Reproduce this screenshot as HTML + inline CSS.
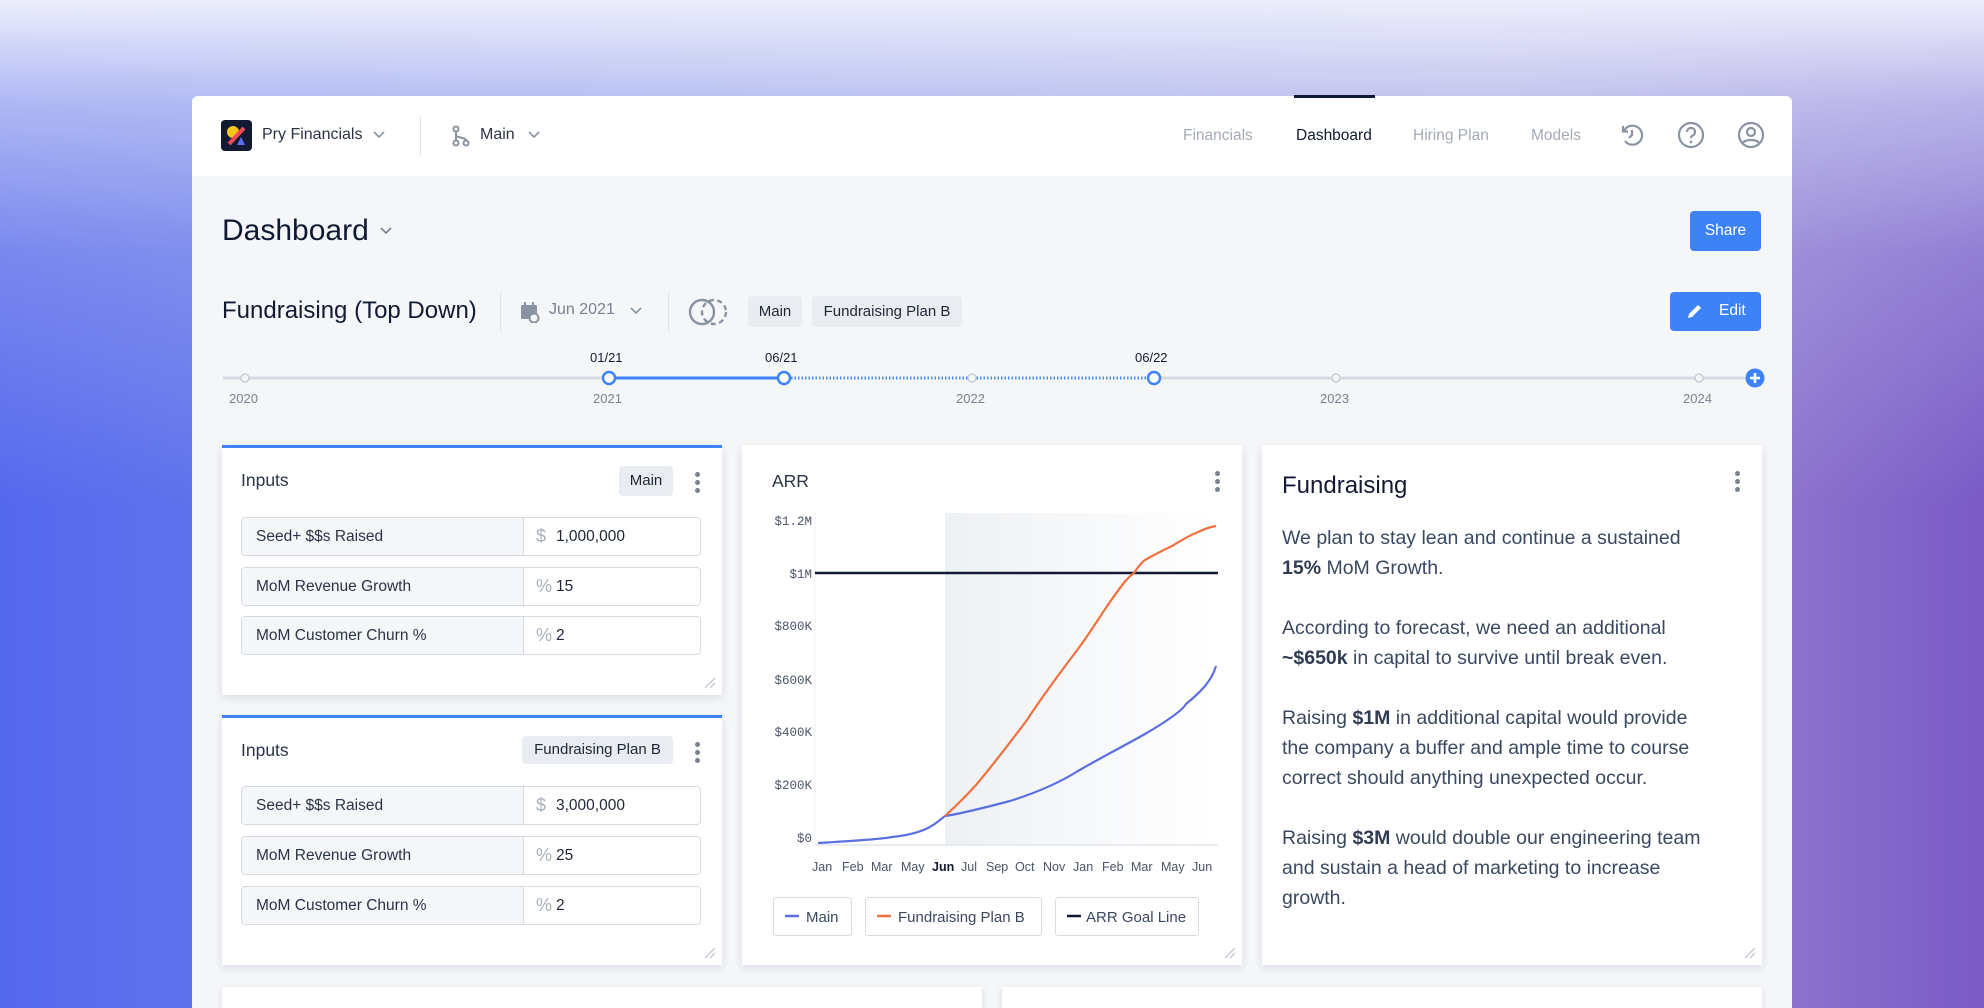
<!DOCTYPE html>
<html style="width:1984px;height:1008px;overflow:hidden"><head><meta charset="utf-8">
<style>
*{box-sizing:border-box;margin:0;padding:0}
body{width:1984px;height:1008px;overflow:hidden;font-family:"Liberation Sans",sans-serif;position:relative;
background:linear-gradient(180deg,rgba(236,238,252,1) 0%,rgba(206,211,246,0.75) 10%,rgba(190,195,240,0.35) 25%,rgba(0,0,0,0) 50%),linear-gradient(90deg,#5468ee 0%,#7f8fe6 40%,#a79ad8 75%,#7a5ac6 100%);}
.a{position:absolute}
.card{position:absolute;background:#fff;box-shadow:0 3px 8px rgba(30,40,80,0.12)}
.t{position:absolute;white-space:nowrap}
.row{position:absolute;left:19px;width:460px;height:39px;border:1px solid #d6dbe3;border-radius:4px;background:#fff;overflow:hidden}
.row .l{position:absolute;left:0;top:0;bottom:0;width:282px;background:#f4f6f8;border-right:1px solid #d6dbe3;font-size:15.5px;color:#2b3446;line-height:37px;padding-left:14px}
.row .u{position:absolute;left:294px;top:0;line-height:37px;font-size:18px;color:#a8b0bc}
.row .v{position:absolute;left:314px;top:0;line-height:37px;font-size:15.5px;color:#1f2737}
.tag{position:absolute;background:#e9edf1;border-radius:4px;font-size:15px;color:#1f2737;text-align:center}
.dots{position:absolute;width:6px}
.dots i{display:block;width:5px;height:5px;border-radius:50%;background:#7a8290;margin-bottom:3px}
.grip{position:absolute;right:6px;bottom:6px;width:12px;height:12px}
.para{font-size:19.5px;line-height:30px;color:#3a4860}
.para b{color:#2e3b52}
</style></head><body>
<div class="a" style="left:192px;top:96px;width:1600px;height:912px;background:#f4f6f8;border-radius:6px 6px 0 0;overflow:hidden">
  <div class="a" style="left:0;top:0;width:1600px;height:80px;background:#fff"></div>
</div>
<svg class="a" style="left:221px;top:120px" width="31" height="31" viewBox="0 0 31 31"><rect width="31" height="31" rx="4" fill="#121a33"/><circle cx="12" cy="12" r="6" fill="#f5c518"/><path d="M8 24 L23 8" stroke="#ee4a5a" stroke-width="4"/><path d="M16 25 L20 17 L24 25Z" fill="#5b6cf0"/></svg>
<div class="t" style="left:262px;top:126px;font-size:16px;color:#2b3446">Pry Financials</div>
<svg class="a" style="left:372px;top:130px" width="14" height="10"><path d="M2 2 L7 7 L12 2" fill="none" stroke="#8a93a2" stroke-width="1.6"/></svg>
<div class="a" style="left:420px;top:116px;width:1px;height:40px;background:#dfe3e8"></div>
<svg class="a" style="left:451px;top:125px" width="20" height="22" viewBox="0 0 20 22"><g fill="none" stroke="#8a93a2" stroke-width="2"><circle cx="5" cy="4" r="2.5"/><circle cx="5" cy="18" r="2.5"/><circle cx="15" cy="18" r="2.5"/><path d="M5 6.5V15.5M5 10c0 3 10 2 10 5.5"/></g></svg>
<div class="t" style="left:480px;top:126px;font-size:16px;color:#2b3446">Main</div>
<svg class="a" style="left:527px;top:130px" width="14" height="10"><path d="M2 2 L7 7 L12 2" fill="none" stroke="#8a93a2" stroke-width="1.6"/></svg>

<div class="t" style="left:1183px;top:127px;font-size:15.5px;color:#a4abb6">Financials</div>
<div class="a" style="left:1294px;top:95px;width:81px;height:3px;background:#121a33"></div>
<div class="t" style="left:1296px;top:127px;font-size:15.5px;color:#121a33">Dashboard</div>
<div class="t" style="left:1413px;top:127px;font-size:15.5px;color:#a4abb6">Hiring Plan</div>
<div class="t" style="left:1531px;top:127px;font-size:15.5px;color:#a4abb6">Models</div>
<svg class="a" style="left:1619px;top:122px" width="26" height="26" viewBox="0 0 26 26"><g fill="none" stroke="#8a93a2" stroke-width="2.2"><path d="M5 9 A9.5 9.5 0 1 1 6 19"/><path d="M4 4 V9.5 H9"/><path d="M13 8 V13 L10 16"/></g></svg>
<svg class="a" style="left:1677px;top:121px" width="28" height="28" viewBox="0 0 28 28"><g fill="none" stroke="#8a93a2" stroke-width="2.2"><circle cx="14" cy="14" r="12"/><path d="M10 11 a4 4 0 1 1 5.5 3.6 c-1.2.5 -1.5 1.3 -1.5 2.6"/></g><circle cx="14" cy="21" r="1.4" fill="#8a93a2"/></svg>
<svg class="a" style="left:1737px;top:121px" width="28" height="28" viewBox="0 0 28 28"><g fill="none" stroke="#8a93a2" stroke-width="2.2"><circle cx="14" cy="14" r="12"/><circle cx="14" cy="11" r="4"/><path d="M6 22 c2-4 14-4 16 0"/></g></svg>

<div class="t" style="left:222px;top:214px;font-size:30px;color:#121a33">Dashboard</div>
<svg class="a" style="left:379px;top:226px" width="14" height="10"><path d="M2 2 L7 7 L12 2" fill="none" stroke="#7a8290" stroke-width="1.6"/></svg>
<div class="a" style="left:1690px;top:211px;width:71px;height:40px;background:#3d82f6;border-radius:4px;color:#fff;font-size:15.5px;line-height:40px;text-align:center">Share</div>

<div class="t" style="left:222px;top:297px;font-size:24px;color:#121a33">Fundraising (Top Down)</div>
<div class="a" style="left:500px;top:292px;width:1px;height:40px;background:#dfe3e8"></div>
<svg class="a" style="left:520px;top:301px" width="20" height="22" viewBox="0 0 20 22"><g fill="#8a93a2"><rect x="1" y="4" width="16" height="14" rx="1.5"/><rect x="4" y="1" width="2" height="4"/><rect x="12" y="1" width="2" height="4"/></g><circle cx="14" cy="17" r="4.5" fill="#f4f6f8" stroke="#8a93a2" stroke-width="2"/></svg>
<div class="t" style="left:549px;top:301px;font-size:16px;color:#7a8290">Jun 2021</div>
<svg class="a" style="left:629px;top:306px" width="14" height="10"><path d="M2 2 L7 7 L12 2" fill="none" stroke="#8a93a2" stroke-width="1.6"/></svg>
<div class="a" style="left:668px;top:292px;width:1px;height:40px;background:#dfe3e8"></div>
<svg class="a" style="left:687px;top:296px" width="42" height="32" viewBox="0 0 42 32"><g fill="none" stroke="#8a93a2" stroke-width="2.4"><circle cx="15" cy="16" r="12"/><circle cx="27" cy="16" r="12" stroke-dasharray="5 3.5"/></g></svg>
<div class="tag" style="left:748px;top:296px;width:54px;height:31px;line-height:31px">Main</div>
<div class="tag" style="left:812px;top:296px;width:150px;height:31px;line-height:31px">Fundraising Plan B</div>
<div class="a" style="left:1670px;top:292px;width:91px;height:39px;background:#3d82f6;border-radius:4px"></div>
<svg class="a" style="left:1686px;top:302px" width="18" height="18" viewBox="0 0 18 18"><path d="M2 16 L3 12 L12 3 L15 6 L6 15Z" fill="#fff"/></svg>
<div class="t" style="left:1719px;top:302px;font-size:15.5px;color:#fff">Edit</div>

<svg class="a" style="left:215px;top:350px" width="1560" height="60">
<line x1="8" y1="28" x2="394" y2="28" stroke="#d6dbe1" stroke-width="3"/>
<line x1="394" y1="28" x2="569" y2="28" stroke="#3d82f6" stroke-width="3"/>
<line x1="569" y1="28" x2="939" y2="28" stroke="#4a90e2" stroke-width="3" stroke-dasharray="1.5 2"/>
<line x1="939" y1="28" x2="1530" y2="28" stroke="#d6dbe1" stroke-width="3"/>
<g fill="#f4f6f8" stroke="#c8cdd4" stroke-width="1.5"><circle cx="30" cy="28" r="4"/><circle cx="757" cy="28" r="4"/><circle cx="1121" cy="28" r="4"/><circle cx="1484" cy="28" r="4"/></g>
<g fill="#fff" stroke="#3d82f6" stroke-width="2.5"><circle cx="394" cy="28" r="6"/><circle cx="569" cy="28" r="6"/><circle cx="939" cy="28" r="6"/></g>
<circle cx="1540" cy="28" r="9.5" fill="#3d82f6"/><path d="M1540 23V33M1535 28H1545" stroke="#fff" stroke-width="2.5"/>
</svg>
<div class="t" style="left:590px;top:350px;font-size:13px;color:#121a33">01/21</div>
<div class="t" style="left:765px;top:350px;font-size:13px;color:#121a33">06/21</div>
<div class="t" style="left:1135px;top:350px;font-size:13px;color:#121a33">06/22</div>
<div class="t" style="left:229px;top:391px;font-size:13px;color:#7a8290">2020</div>
<div class="t" style="left:593px;top:391px;font-size:13px;color:#7a8290">2021</div>
<div class="t" style="left:956px;top:391px;font-size:13px;color:#7a8290">2022</div>
<div class="t" style="left:1320px;top:391px;font-size:13px;color:#7a8290">2023</div>
<div class="t" style="left:1683px;top:391px;font-size:13px;color:#7a8290">2024</div>

<div class="card" style="left:222px;top:445px;width:500px;height:250px;border-top:3px solid #3d82f6">
  <div class="t" style="left:19px;top:22px;font-size:17.5px;color:#2b3446">Inputs</div>
  <div class="tag" style="left:397px;top:18px;width:54px;height:30px;line-height:30px">Main</div>
  <div class="dots" style="left:473px;top:24px"><i></i><i></i><i></i></div>
  <div class="row" style="top:69px"><div class="l">Seed+ $$s Raised</div><div class="u">$</div><div class="v">1,000,000</div></div>
  <div class="row" style="top:119px"><div class="l">MoM Revenue Growth</div><div class="u">%</div><div class="v">15</div></div>
  <div class="row" style="top:168px"><div class="l">MoM Customer Churn %</div><div class="u">%</div><div class="v">2</div></div>
  <svg class="grip" viewBox="0 0 12 12"><path d="M1 11L11 1M6 11L11 6" stroke="#b8bec8" stroke-width="1.2"/></svg>
</div>
<div class="card" style="left:222px;top:715px;width:500px;height:250px;border-top:3px solid #3d82f6">
  <div class="t" style="left:19px;top:22px;font-size:17.5px;color:#2b3446">Inputs</div>
  <div class="tag" style="left:300px;top:18px;width:151px;height:28px;line-height:28px">Fundraising Plan B</div>
  <div class="dots" style="left:473px;top:24px"><i></i><i></i><i></i></div>
  <div class="row" style="top:68px"><div class="l">Seed+ $$s Raised</div><div class="u">$</div><div class="v">3,000,000</div></div>
  <div class="row" style="top:118px"><div class="l">MoM Revenue Growth</div><div class="u">%</div><div class="v">25</div></div>
  <div class="row" style="top:168px"><div class="l">MoM Customer Churn %</div><div class="u">%</div><div class="v">2</div></div>
  <svg class="grip" viewBox="0 0 12 12"><path d="M1 11L11 1M6 11L11 6" stroke="#b8bec8" stroke-width="1.2"/></svg>
</div>

<div class="card" style="left:742px;top:445px;width:500px;height:520px">
  <div class="t" style="left:30px;top:26px;font-size:17.5px;color:#2b3446">ARR</div>
  <div class="dots" style="left:473px;top:26px"><i></i><i></i><i></i></div>
  <svg class="grip" viewBox="0 0 12 12"><path d="M1 11L11 1M6 11L11 6" stroke="#b8bec8" stroke-width="1.2"/></svg>
</div>
<svg class="a" style="left:742px;top:445px" width="500" height="520" font-family="Liberation Mono, monospace" font-size="12.5" fill="#4a5468">
<defs><linearGradient id="sh" x1="0" x2="1"><stop offset="0" stop-color="#eef1f4"/><stop offset="1" stop-color="#ffffff"/></linearGradient></defs>
<rect x="203" y="68" width="273" height="332" fill="url(#sh)"/>
<line x1="73" y1="68" x2="73" y2="400" stroke="#eef0f3"/>
<line x1="73" y1="400" x2="476" y2="400" stroke="#e2e5ea" stroke-width="1.5"/>
<g text-anchor="end"><text x="70" y="80">$1.2M</text><text x="70" y="133">$1M</text><text x="70" y="185">$800K</text><text x="70" y="239">$600K</text><text x="70" y="291">$400K</text><text x="70" y="344">$200K</text><text x="70" y="397">$0</text></g>
<line x1="73" y1="128" x2="476" y2="128" stroke="#121a33" stroke-width="2.5"/>
<path d="M76 398 C110 396 140 394 150 392 C170 390 185 385 194 378 L203 371 C210 370 230 366 268 356 C300 346 320 336 336 326 C360 312 380 302 403 289 C420 279 440 266 444 259 C460 246 470 235 474 221" fill="none" stroke="#5a6fe0" stroke-width="2.2"/>
<path d="M203 371 C215 360 225 350 234 340 C255 315 270 295 285 275 C300 252 320 225 336 204 C350 185 360 168 370 154 C380 140 385 133 392 128 C396 122 400 117 403 115 C415 108 422 105 430 101 C440 95 448 90 454 88 C462 84 468 82 474 81" fill="none" stroke="#f0703f" stroke-width="2.2"/>
<g font-family="Liberation Sans, sans-serif" font-size="12.5" fill="#4a5468">
<text x="70" y="426">Jan</text><text x="100" y="426">Feb</text><text x="129" y="426">Mar</text><text x="159" y="426">May</text><text x="190" y="426" fill="#121a33" font-weight="bold">Jun</text><text x="219" y="426">Jul</text><text x="244" y="426">Sep</text><text x="273" y="426">Oct</text><text x="301" y="426">Nov</text><text x="331" y="426">Jan</text><text x="360" y="426">Feb</text><text x="389" y="426">Mar</text><text x="419" y="426">May</text><text x="450" y="426">Jun</text>
</g>
<g font-family="Liberation Sans, sans-serif" font-size="15" fill="#3a4860">
<rect x="31.5" y="452.5" width="78" height="38" rx="3" fill="#fff" stroke="#d6dbe3"/><line x1="43" y1="471" x2="57" y2="471" stroke="#5a6fe0" stroke-width="2.5"/><text x="64" y="477">Main</text>
<rect x="123.5" y="452.5" width="176" height="38" rx="3" fill="#fff" stroke="#d6dbe3"/><line x1="135" y1="471" x2="149" y2="471" stroke="#f0703f" stroke-width="2.5"/><text x="156" y="477">Fundraising Plan B</text>
<rect x="313.5" y="452.5" width="143" height="38" rx="3" fill="#fff" stroke="#d6dbe3"/><line x1="325" y1="471" x2="339" y2="471" stroke="#121a33" stroke-width="2.5"/><text x="344" y="477">ARR Goal Line</text>
</g>
</svg>

<div class="card" style="left:1262px;top:445px;width:500px;height:520px">
  <div class="t" style="left:20px;top:27px;font-size:24px;color:#121a33">Fundraising</div>
  <div class="dots" style="left:473px;top:26px"><i></i><i></i><i></i></div>
  <div class="a para" style="left:20px;top:78px;width:470px">
    We plan to stay lean and continue a sustained<br><b>15%</b> MoM Growth.<br><br>
    According to forecast, we need an additional<br><b>~$650k</b> in capital to survive until break even.<br><br>
    Raising <b>$1M</b> in additional capital would provide<br>the company a buffer and ample time to course<br>correct should anything unexpected occur.<br><br>
    Raising <b>$3M</b> would double our engineering team<br>and sustain a head of marketing to increase<br>growth.
  </div>
  <svg class="grip" viewBox="0 0 12 12"><path d="M1 11L11 1M6 11L11 6" stroke="#b8bec8" stroke-width="1.2"/></svg>
</div>

<div class="card" style="left:222px;top:987px;width:760px;height:21px"></div>
<div class="card" style="left:1002px;top:987px;width:760px;height:21px"></div>
</body></html>
